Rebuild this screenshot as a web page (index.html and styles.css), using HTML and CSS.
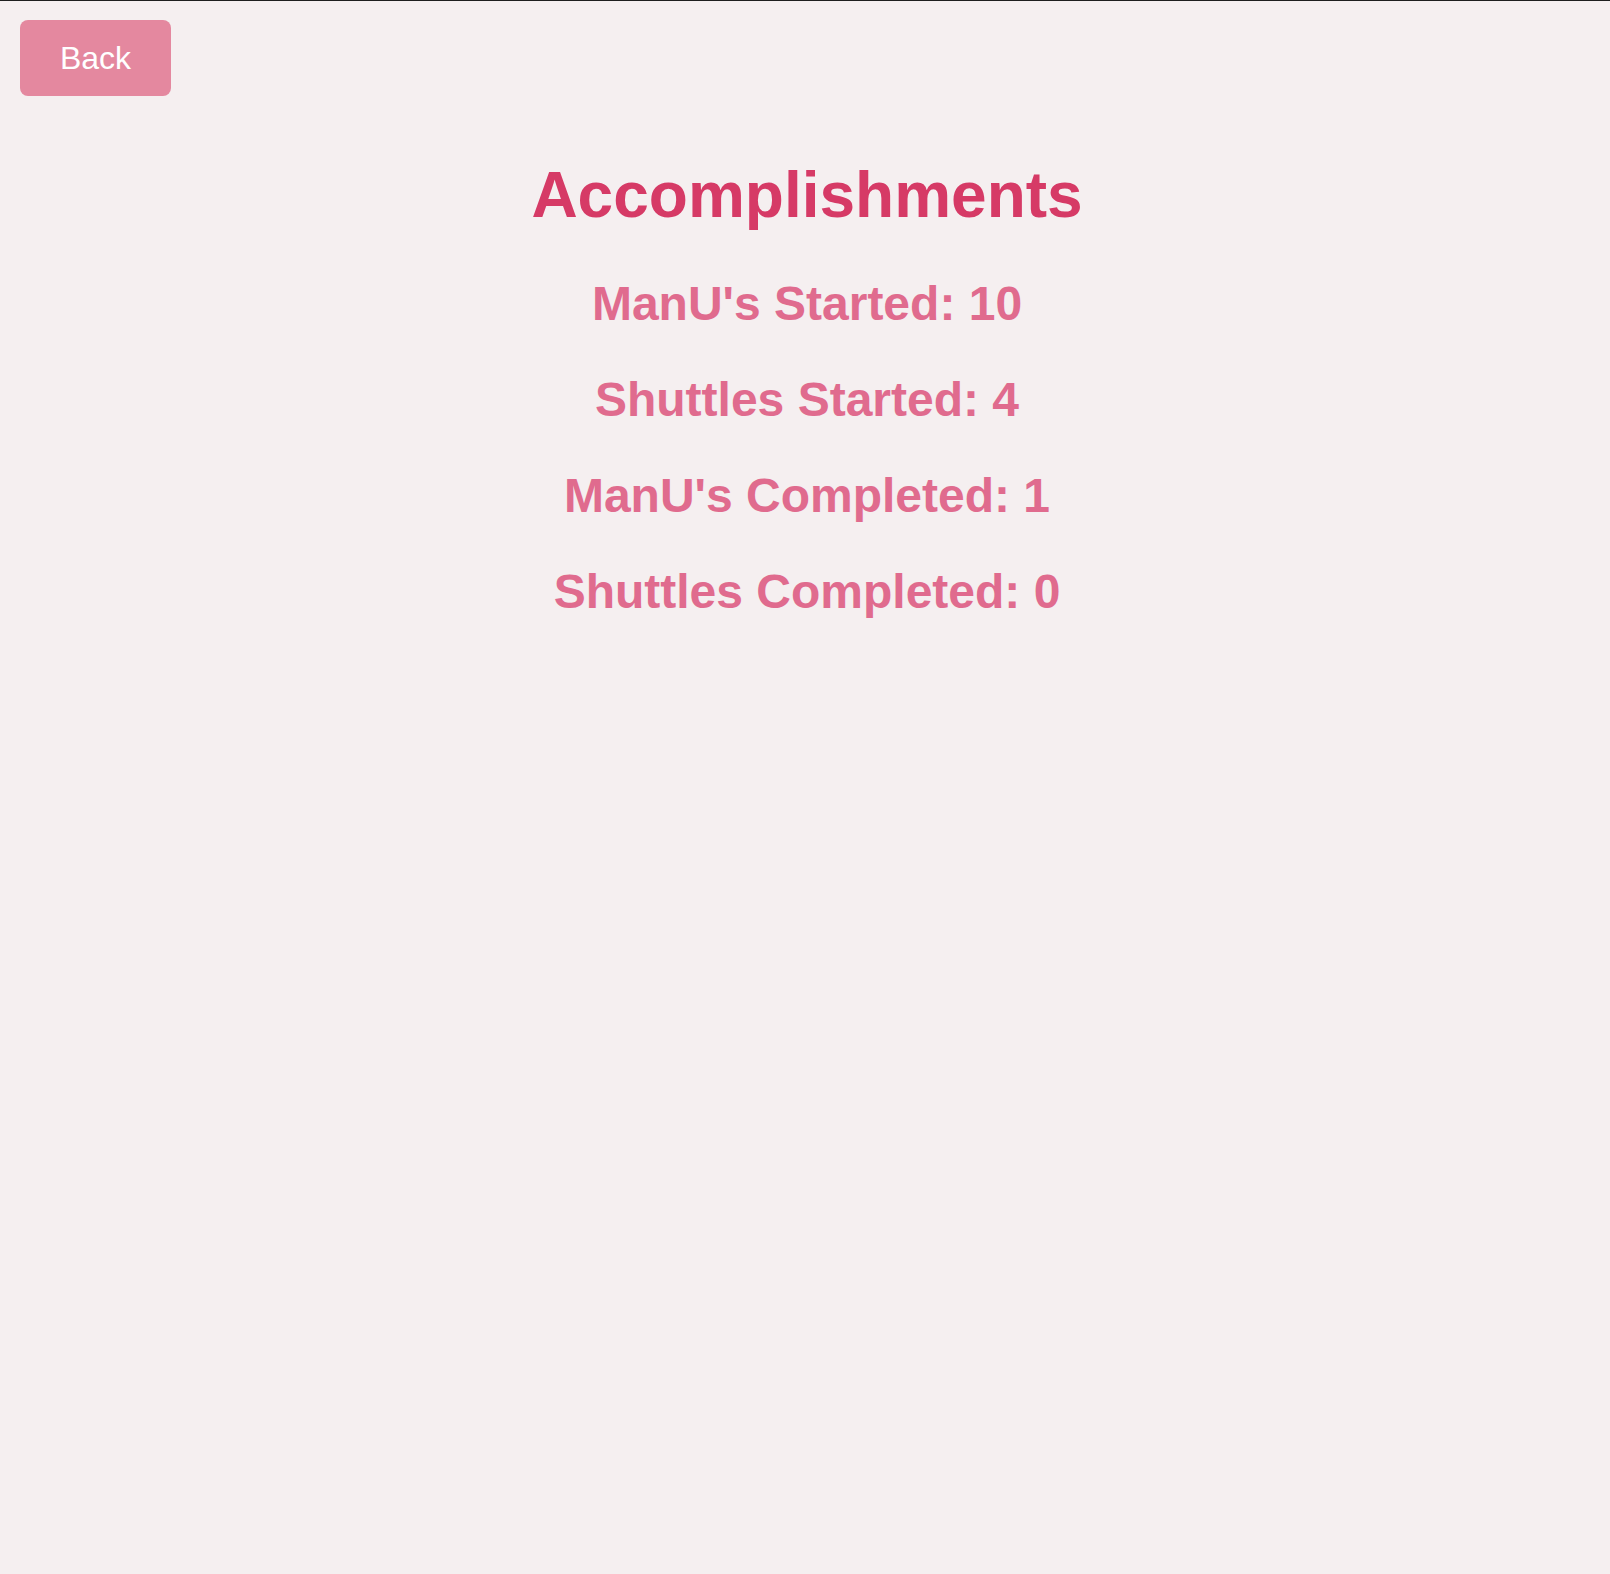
FILE: index.html
```html
<!DOCTYPE html>
<html lang="en">
<head>
<meta charset="utf-8">
<title>Accomplishments</title>
<link rel="stylesheet" href="styles.css">
</head>
<body>
<div class="page">
  <div class="topbar">
    <button class="back-btn" type="button">Back</button>
  </div>
  <main class="content">
    <h1 class="title">Accomplishments</h1>
    <h2 class="stat">ManU's Started: 10</h2>
    <h2 class="stat">Shuttles Started: 4</h2>
    <h2 class="stat">ManU's Completed: 1</h2>
    <h2 class="stat">Shuttles Completed: 0</h2>
  </main>
</div>
</body>
</html>
```

FILE: styles.css
```css
html, body {
  margin: 0;
  padding: 0;
  background: #f5eff0;
}

body {
  min-height: 1574px;
  box-sizing: border-box;
  border-top: 1px solid #1e1e1e;
  font-family: "Liberation Sans", Arial, Helvetica, sans-serif;
}

.page {
  padding: 19px 20px 0 20px;
}

.topbar {
  display: flex;
}

.back-btn {
  display: flex;
  align-items: center;
  justify-content: center;
  width: 151px;
  height: 76px;
  padding: 0;
  border: none;
  border-radius: 8px;
  background: #e4889f;
  color: #ffffff;
  font-family: "Liberation Sans", Arial, Helvetica, sans-serif;
  font-size: 32px;
  cursor: pointer;
}

.content {
  display: flex;
  flex-direction: column;
  align-items: center;
  text-align: center;
  padding-left: 4px;
}

.title {
  margin: 62px 0 44px 0;
  font-size: 64px;
  font-weight: bold;
  color: #d63a66;
}

.stat {
  margin: 0 0 41px 0;
  font-size: 48px;
  font-weight: bold;
  color: #e06b8e;
}
```
